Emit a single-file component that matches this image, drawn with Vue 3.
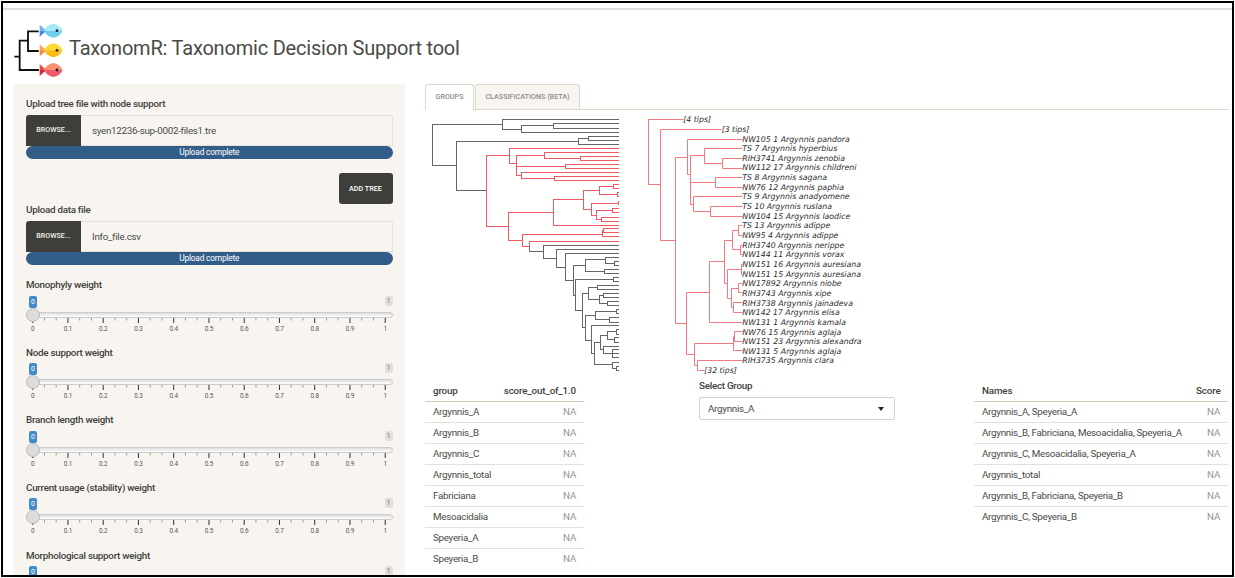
<script setup>
const END = 594
const H = (x1, x2, y) => [x1, y, x2, y]
const V = (x, y1, y2) => [x, y1, x, y2]
// bracket: vertical bar at x joining two tips
const F = (x, a, b, end = END) => [V(x, a, b), H(x, end, a), H(x, end, b)]

// Coordinates are in thirds of a pixel and snapped to the pixel grid.
const snap = (n) => Math.floor(n / 3) + 0.5
const toPath = (segs) =>
  segs.map(([a, b, c, d]) => `M${snap(a)} ${snap(b)}L${snap(c)} ${snap(d)}`).join('')

const black = toPath([
  V(38, 148, 272), H(38, 247, 148), V(247, 133, 163), H(247, END, 133), H(247, 303, 163),
  V(303, 152, 171), H(303, 401, 152), H(303, END, 171), ...F(401, 145, 159),
  H(38, 109, 272), V(109, 199, 347), H(109, 475, 199), V(475, 190, 208), H(475, 505, 190),
  H(475, END, 208), ...F(505, 184, 196), H(109, 198, 347),
  V(328, 514, 528), H(328, 370, 528), V(370, 510, 549), H(370, END, 510), H(370, 410, 549),
  V(410, 522, 576), H(410, END, 522), H(410, 436, 576), V(436, 534, 617), H(436, END, 534),
  H(436, 460, 617), V(460, 572, 660), H(460, 495, 572), V(495, 554, 589), H(495, 557, 554),
  V(557, 546, 565), H(557, END, 546), H(557, 583, 565), ...F(583, 558, 571),
  H(495, 553, 589), ...F(553, 582, 595), H(460, 466, 660), V(466, 612, 707),
  H(466, 579, 612), ...F(579, 606, 618), H(466, 487, 707), V(487, 655, 758),
  H(487, 505, 655), V(505, 637, 673), H(505, 533, 637), ...F(533, 631, 643),
  H(505, 537, 673), V(537, 660, 685), H(537, 549, 660), ...F(549, 654, 666),
  H(537, 561, 685), ...F(561, 680, 691), H(487, 495, 758), V(495, 722, 795),
  H(495, 527, 722), V(527, 710, 734), H(527, 588, 710), ...F(588, 704, 716),
  H(527, 569, 734), ...F(569, 728, 741), H(495, 513, 795), V(513, 752, 836),
  H(513, END, 752), H(513, 522, 836), V(522, 803, 869), H(522, 541, 803),
  V(541, 782, 824), H(541, 562, 782), V(562, 770, 794), H(562, 588, 770),
  ...F(588, 764, 777), H(562, 583, 794), ...F(583, 788, 801), H(541, 549, 824),
  V(549, 813, 834), H(549, END, 813), H(549, 577, 834), ...F(577, 824, 848),
  H(577, END, 836), H(522, 576, 869), V(576, 861, 880), H(576, END, 861),
  H(576, 590, 880), ...F(590, 874, 886),
])

const red = toPath([
  V(198, 241, 454), H(198, 269, 241), V(269, 220, 265), H(269, END, 220), H(269, 290, 265),
  V(290, 241, 300), H(290, 372, 241), V(372, 232, 250), H(372, END, 232), H(372, 481, 250),
  ...F(481, 244, 257), H(290, 437, 273), ...F(437, 268, 280), H(290, 303, 300),
  V(303, 292, 310), H(303, END, 292), H(303, 404, 310), ...F(404, 304, 316),
  H(198, 265, 454), V(265, 411, 495), H(265, 401, 411), V(401, 373, 450), H(401, END, 450),
  H(401, 489, 373), V(489, 346, 402), H(489, 538, 346), V(538, 334, 358),
  H(538, 580, 334), ...F(580, 328, 340), H(538, 591, 358), ...F(591, 352, 365),
  H(489, 513, 402), V(513, 384, 421), H(513, 594, 384), V(594, 378, 389),
  H(513, 529, 421), V(529, 407, 432), H(529, 577, 407), ...F(577, 401, 413),
  H(529, 543, 432), ...F(543, 426, 438), H(265, 308, 495), V(308, 477, 514),
  H(308, 547, 477), V(547, 467, 485), H(547, END, 485), ...F(550, 461, 473),
  H(308, 328, 514), V(328, 498, 514), H(328, END, 498),
])

const E2 = 322
const detail = toPath([
  V(41, 43, 239), H(41, 145, 43), H(41, 77, 239), V(77, 72, 405), H(77, 260, 72),
  H(77, 121, 405), V(121, 156, 654), H(121, 157, 156), V(157, 102, 208), H(157, E2, 102),
  H(157, 167, 208), V(167, 152, 297), H(167, 209, 152), V(209, 130, 175), H(209, E2, 130),
  H(209, 263, 175), ...F(263, 159, 189, E2), H(167, 241, 232), ...F(241, 217, 246, E2),
  H(167, 174, 297), V(174, 275, 319), H(174, E2, 275), H(174, 225, 319),
  ...F(225, 304, 333, E2), H(121, 155, 654), V(155, 561, 748), H(155, 222, 561),
  V(222, 470, 651), H(222, E2, 651), H(222, 267, 470), V(267, 406, 536), H(267, 292, 406),
  V(292, 375, 434), H(292, 311, 375), ...F(311, 361, 390, E2), H(292, 317, 434),
  ...F(317, 420, 449, E2), H(267, 278, 536), V(278, 492, 579), H(278, 320, 492),
  ...F(320, 477, 507, E2), H(278, 288, 579), V(288, 549, 608), H(288, 311, 549),
  ...F(311, 534, 563, E2), H(288, 295, 608), ...F(295, 593, 622, E2), H(155, 177, 748),
  V(177, 715, 782), H(177, 295, 715), V(295, 693, 737), H(295, E2, 737), V(298, 679, 708),
  H(298, E2, 679), H(298, E2, 708), H(177, 187, 782), V(187, 767, 796),
  H(187, E2, 767), H(187, 208, 796),
])

const names = [
  ['[4 tips]', 145, 228], ['[3 tips]', 260, 343],
  ['NW105 1 Argynnis pandora', E2, 644], ['TS 7 Argynnis hyperbius', E2, 607],
  ['RIH3741 Argynnis zenobia', E2, 630], ['NW112 17 Argynnis childreni', E2, 664],
  ['TS 8 Argynnis sagana', E2, 576], ['NW76 12 Argynnis paphia', E2, 627],
  ['TS 9 Argynnis anadyomene', E2, 644], ['TS 10 Argynnis ruslana', E2, 591],
  ['NW104 15 Argynnis laodice', E2, 646], ['TS 13 Argynnis adippe', E2, 586],
  ['NW95 4 Argynnis adippe', E2, 610], ['RIH3740 Argynnis nerippe', E2, 628],
  ['NW144 11 Argynnis vorax', E2, 628], ['NW151 16 Argynnis auresiana', E2, 678],
  ['NW151 15 Argynnis auresiana', E2, 678], ['NW17892 Argynnis niobe', E2, 620],
  ['RIH3743 Argynnis xipe', E2, 589], ['RIH3738 Argynnis jainadeva', E2, 654],
  ['NW142 17 Argynnis elisa', E2, 614], ['NW131 1 Argynnis kamala', E2, 633],
  ['NW76 15 Argynnis aglaja', E2, 619], ['NW151 23 Argynnis alexandra', E2, 680],
  ['NW131 5 Argynnis aglaja', E2, 619], ['RIH3735 Argynnis clara', E2, 597],
  ['[32 tips]', 208, 305],
].map(([text, x1, x2], i) => ({ text, x: x1 / 3, w: (x2 - x1) / 3, y: 17.2 + i * 9.65 }))

const sliders = ['Monophyly weight', 'Node support weight', 'Branch length weight',
  'Current usage (stability) weight', 'Morphological support weight']
const ticks = Array.from({ length: 31 }, (_, i) => ({
  x: 6.7 + i * 11.75,
  major: i % 3 === 0,
  label: i % 3 === 0 ? String(i / 30) : '',
}))

const groups = ['Argynnis_A', 'Argynnis_B', 'Argynnis_C', 'Argynnis_total', 'Fabriciana',
  'Mesoacidalia', 'Speyeria_A', 'Speyeria_B']
const combos = ['Argynnis_A, Speyeria_A', 'Argynnis_B, Fabriciana, Mesoacidalia, Speyeria_A',
  'Argynnis_C, Mesoacidalia, Speyeria_A', 'Argynnis_total',
  'Argynnis_B, Fabriciana, Speyeria_B', 'Argynnis_C, Speyeria_B']
const fish = [
  { y: 92, light: '#a5eaf7', dark: '#6fcdea', t1: '#74b4f5', t2: '#4488e6' },
  { y: 151, light: '#fddb2e', dark: '#f9bd12', t1: '#fba45c', t2: '#f08a3c' },
  { y: 210, light: '#fb8f70', dark: '#f2596b', t1: '#ee4b4b', t2: '#d92a3a' },
]
</script>

<template>
  <div class="frame">
    <header>
      <svg class="logo" width="50" height="56" viewBox="41 69 150 168">
        <path d="M42 170H58M83 122H58V210H116M115 94H83V153H115" fill="none" stroke="#111" stroke-width="5.5" />
        <g v-for="f in fish" :key="f.y" :transform="`translate(0 ${f.y})`">
          <path d="M118 -18L138 0H118Z" :fill="f.t1" />
          <path d="M118 18L138 0H118Z" :fill="f.t2" />
          <path d="M131 0C146 -28 174 -26 187 0Z" :fill="f.light" />
          <path d="M131 0C146 28 174 26 187 0Z" :fill="f.dark" />
          <circle cx="170" cy="0" r="4.2" fill="#16232b" />
        </g>
      </svg>
      <h1>TaxonomR: Taxonomic Decision Support tool</h1>
    </header>
    <div class="body">
      <aside>
        <label class="lab">Upload tree file with node support</label>
        <div class="file"><span class="browse">BROWSE...</span><span class="fname">syen12236-sup-0002-files1.tre</span></div>
        <div class="progress">Upload complete</div>
        <div class="addrow"><button>ADD TREE</button></div>
        <label class="lab">Upload data file</label>
        <div class="file"><span class="browse">BROWSE...</span><span class="fname">Info_file.csv</span></div>
        <div class="progress">Upload complete</div>
        <div class="sliders">
          <div v-for="(s, i) in sliders" :key="s" class="slider">
            <label class="lab">{{ s }}</label>
            <div class="badges"><span class="from">0</span><span class="max">1</span></div>
            <template v-if="i < 4">
              <div class="rail"><div class="track"></div><div class="handle"></div></div>
              <svg class="grid" width="367" height="18">
                <template v-for="t in ticks" :key="t.x">
                  <rect :x="t.x - 0.5" y="0" width="1" :height="t.major ? 5 : 2.5" :fill="t.major ? '#333' : '#999'" />
                  <text v-if="t.major" :x="t.x" y="13.2" text-anchor="middle">{{ t.label }}</text>
                </template>
              </svg>
            </template>
          </div>
        </div>
      </aside>
      <main>
        <nav><span class="tab active">GROUPS</span><span class="tab">CLASSIFICATIONS (BETA)</span></nav>
        <div class="plots">
          <svg width="210" height="266" viewBox="5 35 210 266">
            <path :d="black" stroke="#666" fill="none" stroke-linecap="square" />
            <path :d="red" stroke="#ee5a62" fill="none" stroke-linecap="square" />
          </svg>
          <svg width="240" height="266" viewBox="0 5 240 266">
            <path :d="detail" stroke="#f4797e" fill="none" />
            <text v-for="n in names" :key="n.text" class="tip" :x="n.x" :y="n.y" :textLength="n.w" lengthAdjust="spacingAndGlyphs">{{ n.text }}</text>
          </svg>
        </div>
        <div class="lower">
          <table class="t1">
            <thead><tr><th>group</th><th>score_out_of_1.0</th></tr></thead>
            <tbody><tr v-for="g in groups" :key="g"><td>{{ g }}</td><td>NA</td></tr></tbody>
          </table>
          <div class="select">
            <label class="lab">Select Group</label>
            <div class="box"><span>Argynnis_A</span><i></i></div>
          </div>
          <table class="t2">
            <thead><tr><th>Names</th><th>Score</th></tr></thead>
            <tbody><tr v-for="c in combos" :key="c"><td>{{ c }}</td><td>NA</td></tr></tbody>
          </table>
        </div>
      </main>
    </div>
  </div>
</template>

<style>
body { margin: 0; background: #fff; }
</style>

<style scoped>
* { box-sizing: border-box; }
.frame { width: 1233px; height: 576px; margin: 1px 0 0 1px; border: 2px solid #000; overflow: hidden; background: #fff; font-family: Roboto, "Liberation Sans", sans-serif; font-size: 9.8px; letter-spacing: -0.28px; color: #4a4b46; }
header { height: 76px; margin-top: 5px; border-top: 2px solid #dfdbe2; padding: 13px 0 0 11px; display: flex; }
.logo { flex: none; }
h1 { margin: 12px 0 0 5px; font-size: 20px; letter-spacing: -0.2px; line-height: 26px; font-weight: 400; white-space: nowrap; }
.body { display: flex; }
aside { width: 392px; height: 520px; margin-left: 10px; background: #f8f5f0; padding: 14px 12.5px 0 13px; flex: none; }
.lab { display: block; height: 12px; line-height: 12px; font-weight: 500; letter-spacing: -0.26px; white-space: nowrap; color: #3e3f3a; }
.file { display: flex; margin-top: 5px; height: 31px; }
.browse { width: 55px; background: #3e3f3a; color: #f3f1ec; font-size: 7.2px; letter-spacing: 0; font-weight: 500; line-height: 30px; text-align: center; flex: none; border-radius: 3px 0 0 0; }
.fname { flex: 1; padding-left: 11px; line-height: 29px; border: 1px solid #e6e0d6; border-left: 0; border-radius: 0 3px 0 0; }
.progress { height: 13px; border-radius: 7px; background: #325d88; color: #fff; font-size: 8.4px; letter-spacing: -0.2px; line-height: 13px; text-align: center; }
.addrow { display: flex; justify-content: flex-end; margin-top: 14px; }
button { width: 54px; height: 31px; border: 0; border-radius: 3px; background: #3e3f3a; color: #fff; font: 500 7.2px/30px Roboto, sans-serif; letter-spacing: 0; padding: 0; }
.sliders { margin-top: 14px; }
.slider { height: 67.65px; }
.badges { display: flex; justify-content: space-between; align-items: flex-start; padding: 0 0 0 3px; margin-top: 4.5px; height: 12px; font-size: 7px; letter-spacing: 0; }
.from { width: 8px; height: 12px; line-height: 12px; text-align: center; color: #fff; background: #428bca; border-radius: 2px; }
.max { width: 8px; height: 10px; line-height: 10px; text-align: center; color: #777; background: #e1dfda; border-radius: 2px; }
.rail { height: 14px; position: relative; display: flex; align-items: center; }
.track { flex: 1; height: 6px; border: 1px solid #ccc; border-radius: 4px; background: linear-gradient(#dedede, #fff); }
.handle { position: absolute; left: 0; top: 0; width: 14px; height: 14px; border-radius: 50%; border: 1px solid #bbb; background: #dcdcdc; }
.grid { display: block; margin-top: -4px; }
.grid text { font-size: 6.4px; letter-spacing: -0.1px; fill: #555; }
main { flex: 1; margin-left: 20px; }
nav { display: flex; gap: 1px; height: 26px; width: 804px; border-bottom: 1px solid #dfd7ca; }
.tab { height: 25px; width: 105px; border: 1px solid #dfd7ca; border-bottom: 0; border-radius: 3px 3px 0 0; background: #f8f5f0; color: #8e8c84; font-size: 7.2px; letter-spacing: 0; font-weight: 500; line-height: 24px; text-align: center; white-space: nowrap; }
.tab.active { width: 49px; height: 26px; background: #fff; }
.plots { display: flex; height: 266px; }
.plots svg { flex: none; }
.tip { font: italic 7.9px "DejaVu Sans", sans-serif; letter-spacing: 0; fill: #2c2c2c; }
.lower { display: flex; align-items: flex-start; margin-top: 4px; }
table { border-collapse: collapse; table-layout: fixed; flex: none; }
.t1 { width: 159px; }
.t1 th:first-child { width: 70px; }
.t2 { width: 254px; margin-left: 79px; }
.t2 th:first-child { width: 214px; }
th, td { height: 21px; padding: 0 8px; line-height: 19px; text-align: left; white-space: nowrap; border-bottom: 1px solid #e6dfd5; }
th { font-weight: 500; color: #3e3f3a; border-bottom-color: #d3c9ba; letter-spacing: -0.15px; }
tr > :last-child { text-align: right; }
td:last-child { color: #969692; }
tbody tr:last-child td { border-bottom: 0; }
.select { width: 196px; margin-left: 115px; flex: none; }
.box { display: flex; justify-content: space-between; align-items: center; height: 23px; margin-top: 5px; padding: 0 10px 0 8px; border: 1px solid #d4d0ca; border-radius: 2px; }
.box i { border: 3.5px solid transparent; border-top: 4px solid #222; border-bottom: 0; }
</style>
